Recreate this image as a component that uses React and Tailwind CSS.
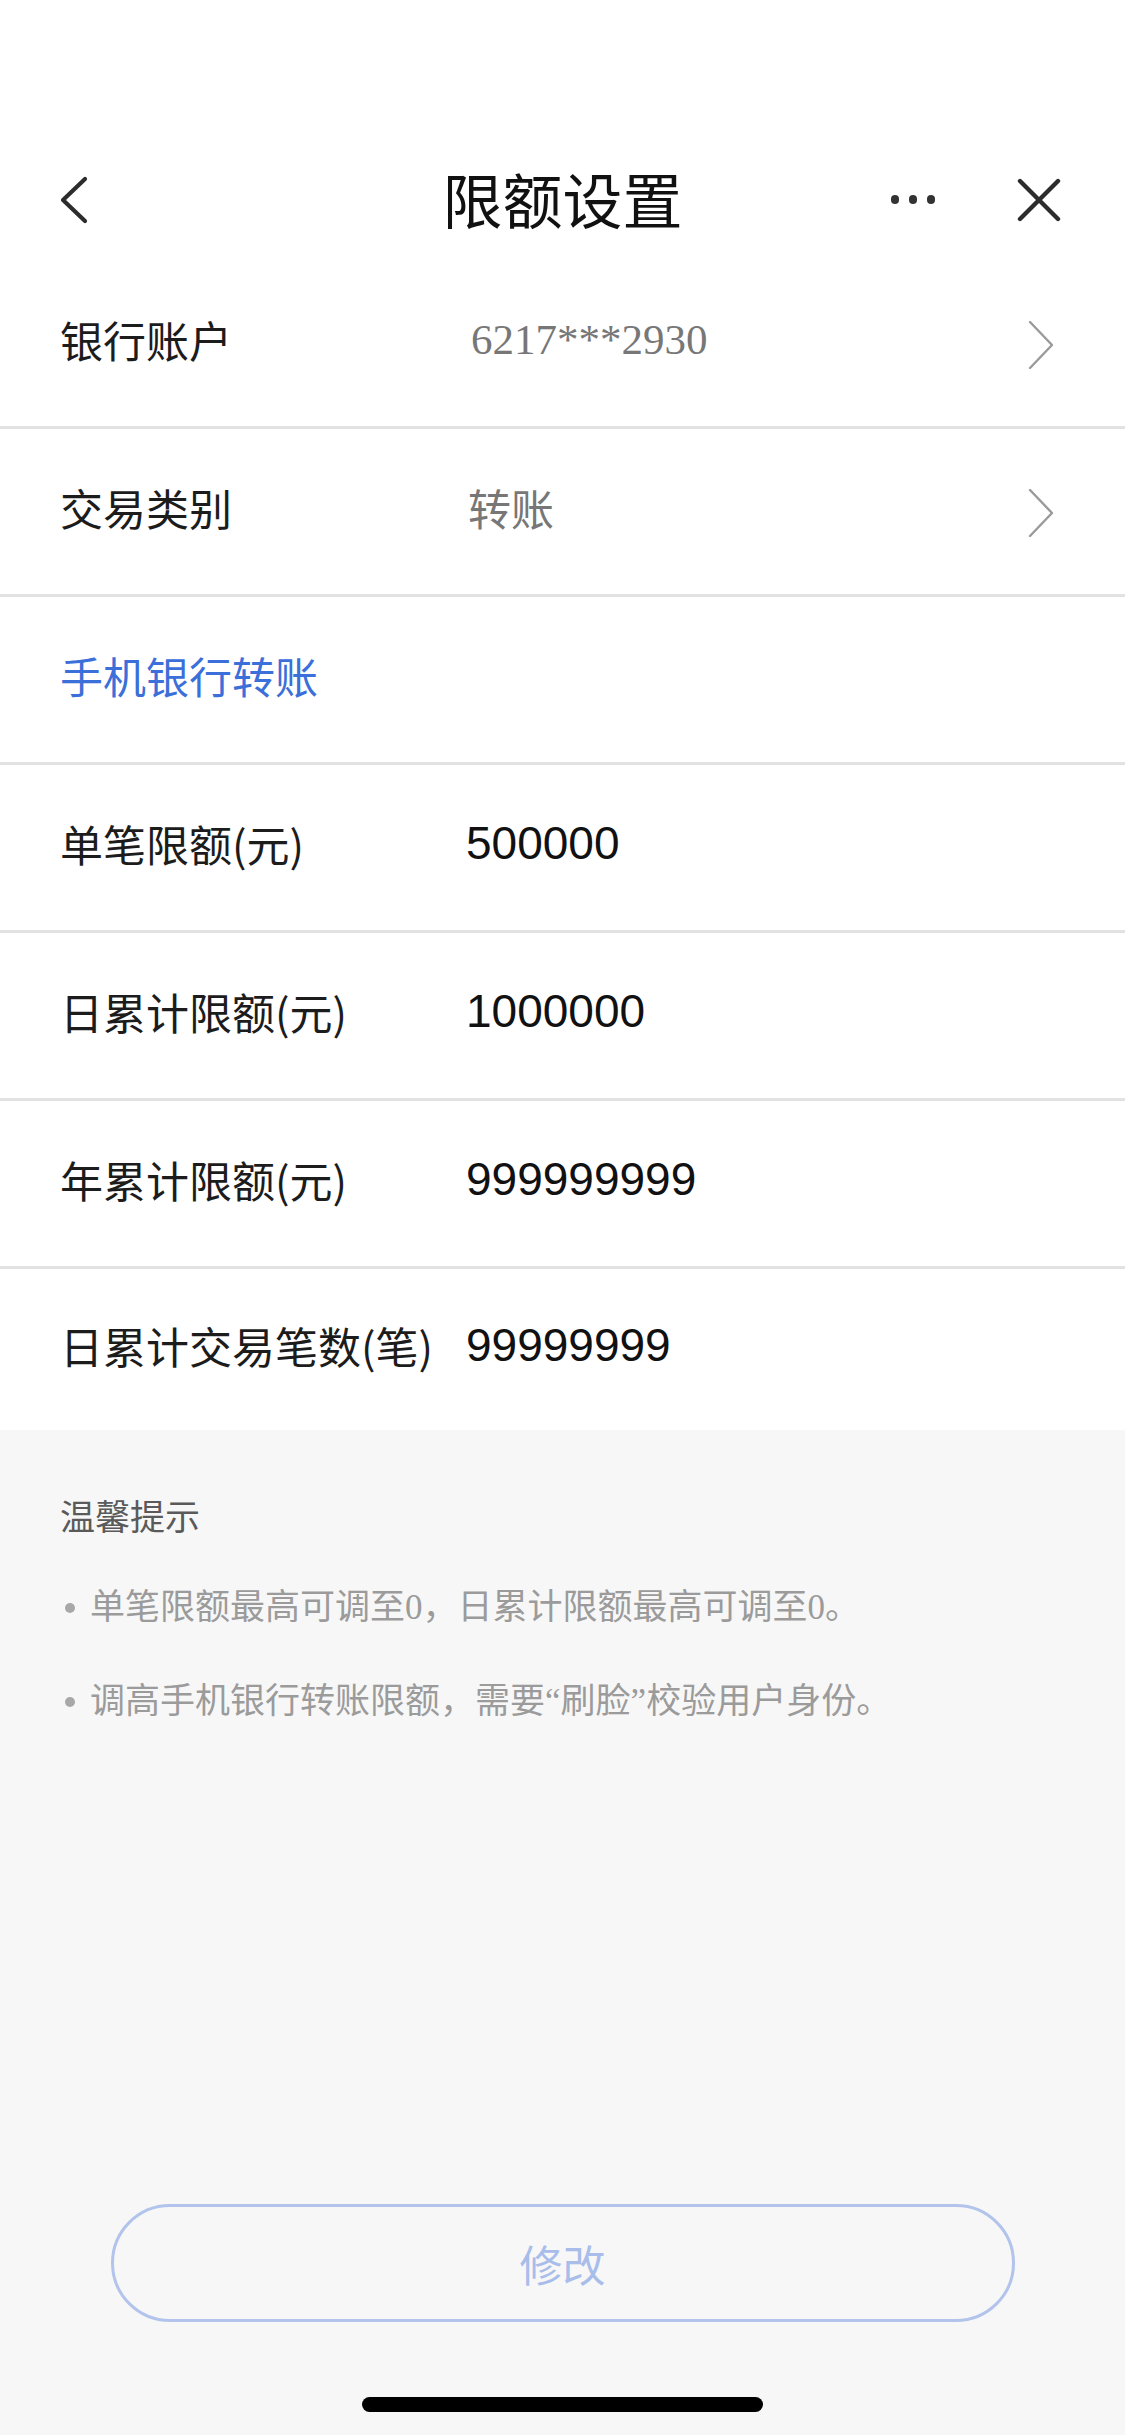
import React from "react";

const CJK = { fontFamily: '"Noto Sans CJK SC", "Noto Sans", sans-serif' };

function Chevron() {
  return (
    <svg width="28" height="50" viewBox="0 0 28 50" className="block">
      <path d="M3 2 L25 25 L3 48" fill="none" stroke="#9a9a9a" strokeWidth="2.4" strokeLinecap="round" strokeLinejoin="round" />
    </svg>
  );
}

function Row({ label, value, valueClass = "", chevron = false, last = false, blue = false }) {
  return (
    <div
      className={`flex items-center ${last ? "h-[161px]" : "h-[168px] border-b-[3px] border-[#e2e2e2]"} pl-[60px] pr-[70px] pb-[9px]`}
    >
      {blue ? (
        <span className="text-[43px] leading-none text-[#3b6fd9]" style={CJK}>
          {label}
        </span>
      ) : (
        <>
          <span className="w-[406px] shrink-0 text-[43px] leading-none text-[#1c1c1c]" style={CJK}>
            {label}
          </span>
          <span className={`leading-none ${valueClass}`}>{value}</span>
          {chevron && (
            <span className="ml-auto mt-[12px]">
              <Chevron />
            </span>
          )}
        </>
      )}
    </div>
  );
}

export default function App() {
  const numCls = "text-[46px] text-[#111] font-['Liberation_Sans',sans-serif]";
  const q = "font-['Liberation_Serif',serif]";
  return (
    <div className="w-[1125px] min-h-[2435px] flex flex-col bg-[#f7f7f7]" style={CJK}>
      <div className="bg-white">
        <div className="h-[138px]" />
        <div className="h-[123px] grid grid-cols-[1fr_auto_1fr] items-center">
          <div className="pl-[58px] flex items-center">
            <svg width="32" height="48" viewBox="0 0 32 48" className="block">
              <path d="M27 3 L5 24 L27 45" fill="none" stroke="#2c2c2c" strokeWidth="4.2" strokeLinecap="round" strokeLinejoin="round" />
            </svg>
          </div>
          <div className="text-[60px] leading-none font-normal text-[#111] -mt-[4px]" style={CJK}>
            限额设置
          </div>
          <div className="flex items-center justify-end pr-[64px] gap-[82px]">
            <div className="flex items-center gap-[9.5px]">
              <span className="w-[8.5px] h-[8.5px] rounded-full bg-[#333]" />
              <span className="w-[8.5px] h-[8.5px] rounded-full bg-[#333]" />
              <span className="w-[8.5px] h-[8.5px] rounded-full bg-[#333]" />
            </div>
            <svg width="44" height="44" viewBox="0 0 44 44" className="block">
              <path d="M3 3 L41 41 M41 3 L3 41" fill="none" stroke="#2c2c2c" strokeWidth="4.4" strokeLinecap="round" />
            </svg>
          </div>
        </div>
        <Row
          label="银行账户"
          value="6217***2930"
          valueClass="text-[43px] text-[#777] font-['Liberation_Serif',serif] pl-[5px]"
          chevron
        />
        <Row label="交易类别" value="转账" valueClass="text-[43px] text-[#777] pl-[2px]" chevron />
        <Row label="手机银行转账" blue />
        <Row label="单笔限额(元)" value="500000" valueClass={numCls} />
        <Row label="日累计限额(元)" value="1000000" valueClass={numCls} />
        <Row label="年累计限额(元)" value="999999999" valueClass={numCls} />
        <Row label="日累计交易笔数(笔)" value="99999999" valueClass={numCls} last />
      </div>

      <div className="flex-1 flex flex-col">
        <div className="pt-[61px] pl-[60px]">
          <div className="text-[35px] leading-[48px] text-[#5a5a5a]">温馨提示</div>
          <div className="mt-[41px] flex flex-col gap-[42px]">
            <div className="flex items-center text-[35px] leading-[48px] text-[#9b9b9b]">
              <span className="w-[10px] h-[10px] rounded-full bg-[#a8a8a8] ml-[5px] mr-[15px] mt-[4px]" />
              <span>
                单笔限额最高可调至<span className={q}>0</span>，日累计限额最高可调至<span className={q}>0</span>。
              </span>
            </div>
            <div className="flex items-center text-[35px] leading-[48px] text-[#9b9b9b]">
              <span className="w-[10px] h-[10px] rounded-full bg-[#a8a8a8] ml-[5px] mr-[15px] mt-[4px]" />
              <span>
                调高手机银行转账限额，需要<span className={q}>“</span>刷脸<span className={q}>”</span>校验用户身份。
              </span>
            </div>
          </div>
        </div>

        <div className="mt-auto flex flex-col items-center">
          <button className="w-[904px] h-[118px] rounded-full border-[3px] border-[#b2c4ec] bg-transparent text-[43px] leading-none text-[#a9bdeb]" style={CJK}>
            修改
          </button>
          <div className="mt-[75px] mb-[23px] w-[401px] h-[15px] rounded-full bg-black" />
        </div>
      </div>
    </div>
  );
}
